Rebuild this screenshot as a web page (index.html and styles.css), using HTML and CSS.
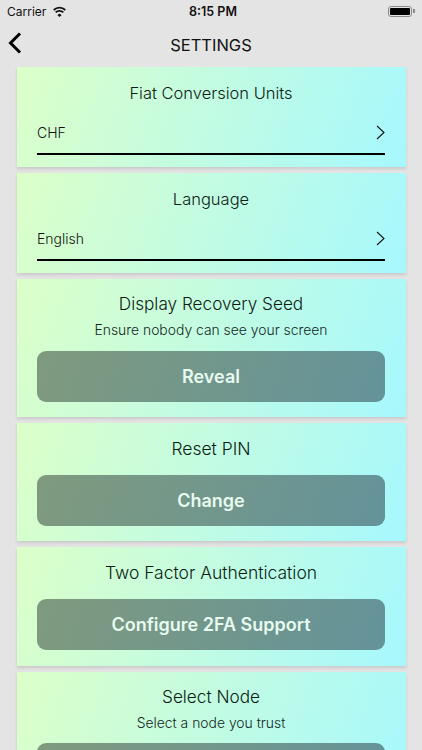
FILE: index.html
```html
<!DOCTYPE html>
<html lang="en">
  <head>
    <meta charset="UTF-8" />
    <meta name="viewport" content="width=device-width, initial-scale=1.0" />
    <title>Settings</title>
    <link rel="stylesheet" href="styles.css">
  </head>
  <body>
    <div class="status-bar">
      <div class="status-left">
        <span>Carrier</span>
        <svg class="wifi" width="15" height="11" viewBox="0 0 15 11">
          <path d="M7.5 7.4 9.6 9.2 7.5 11 5.4 9.2Z" fill="#111" />
          <path d="M3.7 6.4a5.4 5.4 0 0 1 7.6 0" fill="none" stroke="#111" stroke-width="1.9" />
          <path d="M1.7 4a8.2 8.2 0 0 1 11.6 0" fill="none" stroke="#111" stroke-width="1.8" />
        </svg>
      </div>
      <div class="status-time">8:15 PM</div>
      <div class="battery"><div class="battery-fill"></div></div>
    </div>

    <div class="nav-bar">
      <svg class="back" width="16" height="24" viewBox="0 0 16 24">
        <path d="M13 2.5 3.5 12 13 21.5" fill="none" stroke="#000" stroke-width="3" />
      </svg>
      <h1>SETTINGS</h1>
    </div>

    <div class="list">
      <div class="card select-card">
        <div class="card-title">Fiat Conversion Units</div>
        <div class="select-row">
          <span>CHF</span>
          <svg width="10" height="15" viewBox="0 0 10 15"><path d="M2 1 9 7.5 2 14" fill="none" stroke="#111" stroke-width="1.1" /></svg>
        </div>
      </div>

      <div class="card select-card">
        <div class="card-title">Language</div>
        <div class="select-row">
          <span>English</span>
          <svg width="10" height="15" viewBox="0 0 10 15"><path d="M2 1 9 7.5 2 14" fill="none" stroke="#111" stroke-width="1.1" /></svg>
        </div>
      </div>

      <div class="card has-sub">
        <div class="card-title">Display Recovery Seed</div>
        <div class="card-sub">Ensure nobody can see your screen</div>
        <div class="action">Reveal</div>
      </div>

      <div class="card">
        <div class="card-title">Reset PIN</div>
        <div class="action">Change</div>
      </div>

      <div class="card">
        <div class="card-title">Two Factor Authentication</div>
        <div class="action">Configure 2FA Support</div>
      </div>

      <div class="card has-sub">
        <div class="card-title">Select Node</div>
        <div class="card-sub">Select a node you trust</div>
        <div class="action"></div>
      </div>
    </div>
  </body>
</html>
```

FILE: styles.css
```css
html,
body {
  height: 750px;
  overflow: hidden;
}

body {
  margin: 0;
  padding: 0;
  background-color: #e4e4e4;
  font-family: Inter, "Liberation Sans", sans-serif;
  color: #111;
}

.status-bar {
  height: 22px;
  padding: 0 8px 0 7px;
  display: flex;
  align-items: center;
  justify-content: space-between;
  font-size: 12px;
  position: relative;
}

.status-left {
  display: flex;
  align-items: center;
  gap: 6px;
}

.status-time {
  font-size: 12.5px;
  font-weight: 600;
  position: absolute;
  left: 4px;
  right: 0;
  text-align: center;
}

.battery {
  width: 24px;
  height: 11px;
  padding: 1px;
  box-sizing: border-box;
  border: 1px solid #8a8a8a;
  border-radius: 3px;
  margin-right: 2px;
  position: relative;
}

.battery::after {
  content: "";
  position: absolute;
  right: -4px;
  top: 2px;
  width: 2px;
  height: 4px;
  background-color: #8a8a8a;
}

.battery-fill {
  height: 100%;
  background-color: #000;
  border-radius: 1px;
}

.nav-bar {
  height: 45px;
  display: flex;
  align-items: center;
  justify-content: center;
  position: relative;
}

.nav-bar h1 {
  margin: 0;
  font-size: 16.5px;
  font-weight: 400;
}

.back {
  position: absolute;
  left: 7px;
  top: 9px;
}

.list {
  height: 683px;
  overflow: hidden;
  padding: 0 16px 0 17px;
  display: flex;
  flex-direction: column;
  gap: 6px;
}

.card {
  flex-shrink: 0;
  padding: 14px 21px 15.4px 20px;
  background: linear-gradient(110deg, #dcffc8 0%, #a6f8fe 100%);
  box-shadow: 0 2px 3px rgba(0, 0, 0, 0.12);
  text-align: center;
}

.has-sub {
  padding-top: 13px;
}

.select-card {
  height: 100px;
  box-sizing: border-box;
}

.card-title {
  font-size: 17.5px;
  line-height: 24px;
  font-weight: 300;
  color: #0c1c12;
}

.select-card .card-title {
  font-size: 16.5px;
}

.has-sub .card-title {
  font-size: 17.2px;
}

.card-sub {
  font-size: 13.9px;
  line-height: 18px;
  margin-top: 5px;
  font-weight: 300;
  color: #14281e;
}

.select-row {
  margin-top: 13px;
  height: 28px;
  padding-bottom: 7px;
  border-bottom: 2px solid #000;
  display: flex;
  align-items: center;
  justify-content: space-between;
  font-size: 14px;
  font-weight: 300;
}

.action {
  height: 51px;
  margin-top: 14px;
  border-radius: 9px;
  background: linear-gradient(110deg, #7f9a7e 0%, #64939a 100%);
  color: #e8fbef;
  font-size: 18px;
  font-weight: 600;
  line-height: 51px;
}

.card-sub + .action {
  margin-top: 11.5px;
}
```
